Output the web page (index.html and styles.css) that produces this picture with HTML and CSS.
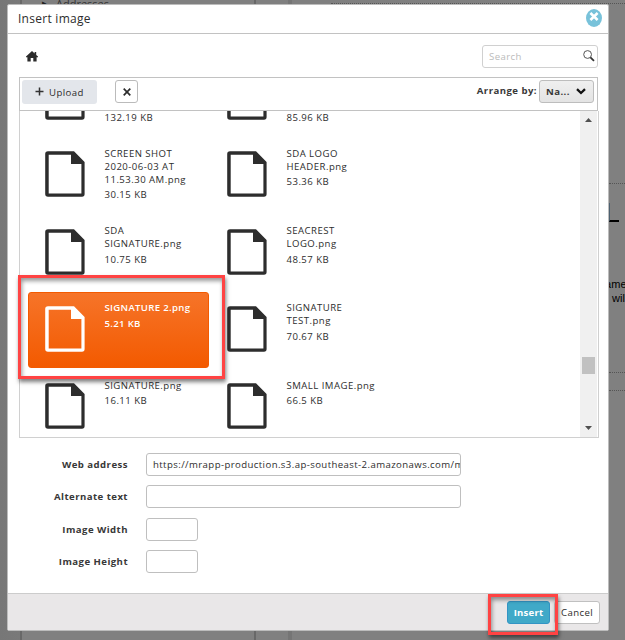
FILE: index.html
```html
<!DOCTYPE html>
<html lang="en">
<head>
<meta charset="utf-8">
<title>Insert image</title>
<link rel="stylesheet" href="styles.css">
</head>
<body>
<svg width="0" height="0" class="defs">
  <symbol id="file" viewBox="0 0 40 46">
    <path fill="currentColor" fill-rule="evenodd" d="M3 .2H29L39.6 11V43Q39.6 45.8 37 45.8H3Q.2 45.8 .2 43V3Q.2 .2 3 .2ZM3.7 3.7V42.4H36.4V13H26V3.7Z"/>
  </symbol>
</svg>
<div class="page">
  <div class="backdrop">
    <span class="tree">▸</span><span class="addresses">Addresses</span>
    <i class="rail rail-a"></i><i class="rail rail-b"></i><i class="rail rail-c"></i>
    <i class="dots dots-top"></i><i class="dots dots-a"></i><i class="dots dots-b"></i><i class="dots dots-c"></i>
    <i class="cap"></i>
    <span class="copy copy-a">name</span><span class="copy copy-b">will</span>
  </div>
  <section class="dialog">
    <header class="head">
      <h1>Insert image</h1>
      <svg class="close" width="16" height="18" viewBox="0 0 16 18"><ellipse cx="8" cy="9" rx="8" ry="9" fill="#78c2da"/><path d="M4.4 4L11.6 11M11.6 4L4.4 11" stroke="#fff" stroke-width="2.6"/></svg>
    </header>
    <div class="main">
      <div class="crumbs">
        <svg class="home" width="12" height="11" viewBox="0 0 12 11"><path fill="#2b2b2b" d="M6 0L8.6 2.4V1H10.2V3.9L12 5.6V6.2H10.6V10.5H7.3V7H4.7V10.5H1.4V6.2H0V5.6Z"/></svg>
        <div class="search"><span>Search</span>
          <svg width="12" height="12" viewBox="0 0 12 12"><circle cx="4.6" cy="4.5" r="3.9" fill="none" stroke="#555" stroke-width="1"/><path d="M7.4 7.3L11 10.8" stroke="#333" stroke-width="1.8"/></svg>
        </div>
      </div>
      <div class="toolbar">
        <div class="upload"><svg width="9" height="9" viewBox="0 0 9 9"><path d="M4.5 .5V8.5M.5 4.5H8.5" stroke="#333" stroke-width="1.5"/></svg>Upload</div>
        <div class="delete"><svg width="8" height="8" viewBox="0 0 8 8"><path d="M.7 .7L7.3 7.3M7.3 .7L.7 7.3" stroke="#2d2d2d" stroke-width="1.7"/></svg></div>
        <span class="arrange">Arrange by:</span>
        <div class="select">Na...<svg width="10" height="7" viewBox="0 0 10 7"><path d="M1 1.2L5 5L9 1.2" fill="none" stroke="#111" stroke-width="2.3"/></svg></div>
      </div>
      <div class="list">
        <div class="grid">
          <div class="tile"><svg><use href="#file"/></svg><div>SCREEN<br>SHOT 2020-06<br>AM.png<small>132.19 KB</small></div></div>
          <div class="tile"><svg><use href="#file"/></svg><div>SCREEN<br>SHOT 2020-06<br>PM.png<small>85.96 KB</small></div></div>
          <div class="tile"><svg><use href="#file"/></svg><div>SCREEN SHOT<br>2020-06-03 AT<br>11.53.30 AM.png<small>30.15 KB</small></div></div>
          <div class="tile"><svg><use href="#file"/></svg><div>SDA LOGO<br>HEADER.png<small>53.36 KB</small></div></div>
          <div class="tile"><svg><use href="#file"/></svg><div>SDA<br>SIGNATURE.png<small>10.75 KB</small></div></div>
          <div class="tile"><svg><use href="#file"/></svg><div>SEACREST<br>LOGO.png<small>48.57 KB</small></div></div>
          <div class="tile selected"><svg><use href="#file"/></svg><div>SIGNATURE 2.png<small>5.21 KB</small></div></div>
          <div class="tile"><svg><use href="#file"/></svg><div>SIGNATURE<br>TEST.png<small>70.67 KB</small></div></div>
          <div class="tile"><svg><use href="#file"/></svg><div>SIGNATURE.png<small>16.11 KB</small></div></div>
          <div class="tile"><svg><use href="#file"/></svg><div>SMALL IMAGE.png<small>66.5 KB</small></div></div>
        </div>
        <div class="scroll">
          <svg width="7" height="4" viewBox="0 0 7 4"><path d="M3.5 0L7 4H0Z" fill="#505050"/></svg>
          <i class="thumb"></i>
          <svg width="7" height="4" viewBox="0 0 7 4"><path d="M0 0H7L3.5 4Z" fill="#505050"/></svg>
        </div>
      </div>
      <div class="form">
        <label>Web address</label><div class="field wide">https://mrapp-production.s3.ap-southeast-2.amazonaws.com/m</div>
        <label>Alternate text</label><div class="field wide"></div>
        <label>Image Width</label><div class="field"></div>
        <label>Image Height</label><div class="field"></div>
      </div>
    </div>
    <footer class="foot"><div class="btn primary">Insert</div><div class="btn">Cancel</div></footer>
  </section>
  <div class="mark mark-file"></div>
  <div class="mark mark-insert"></div>
</div>
</body>
</html>
```
FILE: styles.css
```css
* { box-sizing: border-box; }
body { margin: 0; font-family: "Open Sans", sans-serif; font-size: 9.6px; color: #2d2d2d; }
.defs { position: absolute; }
.page { position: relative; width: 625px; height: 640px; overflow: hidden; padding: 4px 0 0 7px; background: #808080; }
.backdrop { position: absolute; inset: 0; background: linear-gradient(90deg, #777 0, #797979 20px, #808080 21px); }
.backdrop > * { position: absolute; }
.tree { left: 42px; top: -4px; font-size: 9px; color: #222; }
.addresses { left: 56px; top: -3px; font-size: 11px; line-height: 13px; color: #333; letter-spacing: 0; }
.rail { top: 0; bottom: 0; width: 2px; background: #686868; }
.rail-a { left: 20px; }
.rail-b { left: 254px; }
.rail-c { left: 288px; width: 4px; background: #757575; }
.dots { height: 0; border-top: 1px dotted #555; right: 0; }
.dots-top { left: 331px; top: 3px; }
.dots-a { left: 609px; top: 183px; }
.dots-b { left: 609px; top: 372px; }
.dots-c { left: 609px; top: 390px; }
.cap { left: 609px; top: 203px; width: 10px; height: 19px; border-bottom: 2px solid #000; border-left: 1px solid #4d6070; }
.copy { font: 11px/14px "Liberation Sans", sans-serif; color: #000; }
.copy-a { left: 599px; top: 277px; }
.copy-b { left: 612px; top: 291px; }
.dialog { position: relative; width: 602px; height: 627px; display: flex; flex-direction: column; background: #fff; border: 1px solid #bcbcbc; border-radius: 2px; }
.head { height: 29px; flex: none; border-bottom: 1px solid #c2c2c2; display: flex; justify-content: space-between; padding: 4px 6px 0 10px; }
h1 { margin: 0; font-size: 12px; line-height: 19px; font-weight: 400; letter-spacing: .27px; }
.main { flex: 1; padding: 0 9px 0 11px; }
.crumbs { height: 43px; display: flex; justify-content: space-between; padding: 11px 1px 0 6.5px; }
.home { margin-top: 6px; }
.search { width: 116px; height: 23px; border: 1px solid #d0d0d0; border-radius: 3px; display: flex; justify-content: space-between; padding: 4px 2px 0 6px; color: #bbb; letter-spacing: .4px; line-height: 14px; }
.toolbar { width: 579px; height: 34px; border: 1px solid #c2c2c2; display: flex; padding: 2px 3px 0 2px; }
.upload { width: 75px; height: 24px; border-radius: 3px; background: #e3e6eb; display: flex; align-items: center; gap: 5px; padding-left: 13px; letter-spacing: .4px; }
.upload svg { margin-top: -2px; }
.delete { width: 23px; height: 23px; margin-left: 18px; border: 1px solid #bbb; border-radius: 3px; display: flex; align-items: center; justify-content: center; }
.arrange { margin-left: auto; font-weight: 700; line-height: 22px; letter-spacing: .45px; color: #383838; }
.select { width: 55px; height: 23px; margin-left: 2px; border: 1px solid #bdbdbd; border-radius: 3px; background: linear-gradient(#efefef, #e4e4e4); display: flex; align-items: center; justify-content: space-between; padding: 0 7px 0 6px; font-weight: 700; letter-spacing: .4px; color: #383838; }
.list { width: 580px; height: 327px; border: 1px solid #d0d0d0; border-top: 0; display: flex; justify-content: space-between; overflow: hidden; padding-right: 1px; }
.grid { width: 372px; margin: -51px 0 0 8px; display: grid; grid-template-columns: 182px 182px; grid-auto-rows: 77.3px; }
.tile { width: 181px; height: 76px; display: flex; padding: 9.5px 0 0 16.5px; line-height: 13px; letter-spacing: .46px; border-radius: 3px; }
.tile svg { width: 40px; height: 46px; margin: 4.5px 20px 0 0; flex: none; }
.tile small { display: block; font-size: inherit; margin-top: 2.5px; }
.selected { color: #fff; font-weight: 600; background: linear-gradient(#f67429, #f35a00); border: 1px solid #f35a00; padding: 8.5px 0 0 15.5px; letter-spacing: .32px; }
.scroll { width: 17px; background: #f0f0f0; display: flex; flex-direction: column; align-items: center; padding: 7px 0; }
.thumb { width: 13px; height: 17px; background: #c1c1c1; margin: 235px 0 auto; }
.form { display: grid; grid-template-columns: 109px auto; grid-template-rows: 32px 33px 32px 32px; column-gap: 18px; padding-top: 15px; }
label { text-align: right; font-weight: 700; line-height: 23px; letter-spacing: .45px; white-space: nowrap; color: #383838; }
.field { width: 52px; height: 23px; border: 1px solid #bfbfbf; border-radius: 3px; line-height: 21px; padding-left: 6px; overflow: hidden; white-space: nowrap; letter-spacing: .41px; }
.wide { width: 315px; }
.foot { height: 37px; flex: none; border-top: 1px solid #ccc; background: #e9e7e8; display: flex; justify-content: flex-end; gap: 4px; padding: 7px 8px 0 0; }
.btn { width: 46px; height: 23px; border: 1px solid #c0c0c0; border-radius: 3px; background: #fff; text-align: center; line-height: 21px; letter-spacing: .4px; }
.primary { width: 43px; background: #40a9c8; border-color: #3394c4; color: #fff; font-weight: 700; letter-spacing: .2px; }
.mark { position: absolute; border: 3px solid #ff4343; box-shadow: 1px 3px 4px rgba(0,0,0,.5), inset 1px 3px 4px rgba(0,0,0,.4); }
.mark-file { left: 18px; top: 275px; width: 207px; height: 104px; }
.mark-insert { left: 488px; top: 594px; width: 70px; height: 41px; }
```
